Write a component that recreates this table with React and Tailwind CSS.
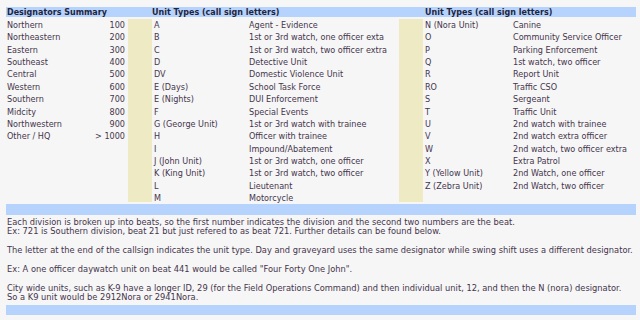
import React from "react";

const left = [
  ["Northern", "100"],
  ["Northeastern", "200"],
  ["Eastern", "300"],
  ["Southeast", "400"],
  ["Central", "500"],
  ["Western", "600"],
  ["Southern", "700"],
  ["Midcity", "800"],
  ["Northwestern", "900"],
  ["Other / HQ", "> 1000"],
];

const units1 = [
  ["A", "Agent - Evidence"],
  ["B", "1st or 3rd watch, one officer exta"],
  ["C", "1st or 3rd watch, two officer extra"],
  ["D", "Detective Unit"],
  ["DV", "Domestic Violence Unit"],
  ["E (Days)", "School Task Force"],
  ["E (Nights)", "DUI Enforcement"],
  ["F", "Special Events"],
  ["G (George Unit)", "1st or 3rd watch with trainee"],
  ["H", "Officer with trainee"],
  ["I", "Impound/Abatement"],
  ["J (John Unit)", "1st or 3rd watch, one officer"],
  ["K (King Unit)", "1st or 3rd watch, two officer"],
  ["L", "Lieutenant"],
  ["M", "Motorcycle"],
];

const units2 = [
  ["N (Nora Unit)", "Canine"],
  ["O", "Community Service Officer"],
  ["P", "Parking Enforcement"],
  ["Q", "1st watch, two officer"],
  ["R", "Report Unit"],
  ["RO", "Traffic CSO"],
  ["S", "Sergeant"],
  ["T", "Traffic Unit"],
  ["U", "2nd watch with trainee"],
  ["V", "2nd watch extra officer"],
  ["W", "2nd watch, two officer extra"],
  ["X", "Extra Patrol"],
  ["Y (Yellow Unit)", "2nd Watch, one officer"],
  ["Z (Zebra Unit)", "2nd Watch, two officer"],
];

function Col({ items, className }) {
  return (
    <div className={"flex flex-col " + (className || "")}>
      {items.map((t, i) => (
        <div key={i} className="h-[12.36px] leading-[12.36px] whitespace-nowrap">
          {t}
        </div>
      ))}
    </div>
  );
}

export default function App() {
  return (
    <div
      className="w-[640px] h-[320px] overflow-hidden bg-[#f6f6f6] text-[#45354c] text-[8.1px] pt-[7px] pl-[6px] pr-[4px]"
      style={{ fontFamily: '"DejaVu Sans", Verdana, sans-serif' }}
    >
      {/* header */}
      <div className="flex h-[10px] bg-[#b5d3fc] font-bold text-[8px] text-[#1f2540] leading-[11px]">
        <div className="w-[146px] pl-[1px]">Designators Summary</div>
        <div className="w-[247px]">Unit Types (call sign letters)</div>
        <div className="pl-[26px]">Unit Types (call sign letters)</div>
      </div>

      {/* body */}
      <div className="flex h-[183px] mt-[2px]">
        <div className="w-[122px] flex pl-[1px] pr-[3px] justify-between">
          <Col items={left.map((r) => r[0])} />
          <Col items={left.map((r) => r[1])} className="items-end" />
        </div>
        <div className="w-[24px] bg-[#eeeac4]" />
        <Col items={units1.map((r) => r[0])} className="w-[97px] pl-[2px]" />
        <Col items={units1.map((r) => r[1])} className="w-[150px]" />
        <div className="w-[24px] bg-[#eeeac4]" />
        <Col items={units2.map((r) => r[0])} className="w-[90px] pl-[2px]" />
        <Col items={units2.map((r) => r[1])} className="flex-1" />
      </div>

      <div className="h-[11px] mt-[2px] bg-[#b5d3fc]" />

      <div className="text-[8.3px] leading-[9.4px] pt-[3px] pl-[1px] whitespace-nowrap">
        <div>Each division is broken up into beats, so the first number indicates the division and the second two numbers are the beat.</div>
        <div>Ex: 721 is Southern division, beat 21 but just refered to as beat 721. Further details can be found below.</div>
        <div className="h-[9.4px]" />
        <div>The letter at the end of the callsign indicates the unit type. Day and graveyard uses the same designator while swing shift uses a different designator.</div>
        <div className="h-[9.4px]" />
        <div>Ex: A one officer daywatch unit on beat 441 would be called "Four Forty One John".</div>
        <div className="h-[9.4px]" />
        <div>City wide units, such as K-9 have a longer ID, 29 (for the Field Operations Command) and then individual unit, 12, and then the N (nora) designator.</div>
        <div>So a K9 unit would be 2912Nora or 2941Nora.</div>
      </div>

      <div className="h-[10px] mt-[2px] bg-[#b5d3fc]" />
    </div>
  );
}
